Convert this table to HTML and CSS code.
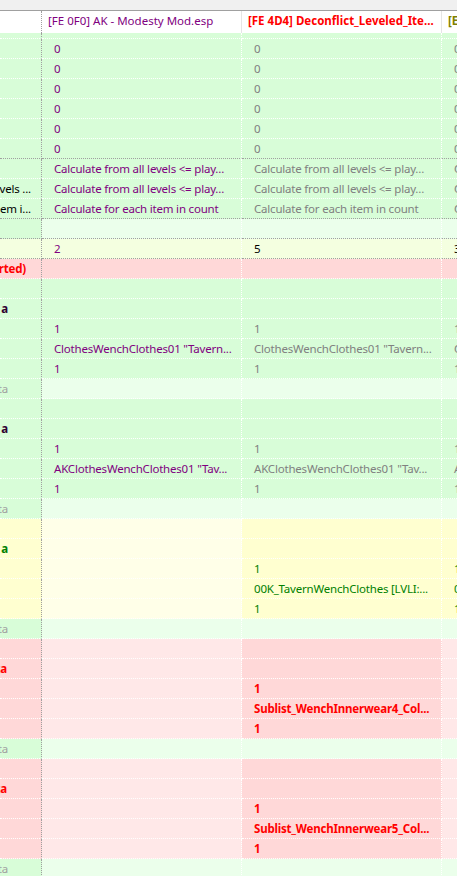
FILE: index.html
```html
<!DOCTYPE html>
<html lang="en">
<head>
    <meta charset="UTF-8">
    <title>Record Compare</title>
    <link rel="stylesheet" href="styles.css">
</head>
<body>
    <div class="topbar"></div>
    <div class="head">
        <div class="hc c0"></div>
        <div class="hc c1 pu">[FE 0F0] AK - Modesty Mod.esp</div>
        <div class="hc c2 rd">[FE 4D4] Deconflict_Leveled_Ite...</div>
        <div class="hc c3 ol">[E</div>
    </div>
    <div class="grid">
        <div class="row g part"><div class="c c0"></div><div class="c c1"></div><div class="c c2"></div><div class="c c3"></div></div>

        <div class="row g"><div class="c c0"></div><div class="c c1 pu">0</div><div class="c c2 gr">0</div><div class="c c3 gr">0</div></div>
        <div class="row g"><div class="c c0"></div><div class="c c1 pu">0</div><div class="c c2 gr">0</div><div class="c c3 gr">0</div></div>
        <div class="row g"><div class="c c0"></div><div class="c c1 pu">0</div><div class="c c2 gr">0</div><div class="c c3 gr">0</div></div>
        <div class="row g"><div class="c c0"></div><div class="c c1 pu">0</div><div class="c c2 gr">0</div><div class="c c3 gr">0</div></div>
        <div class="row g"><div class="c c0"></div><div class="c c1 pu">0</div><div class="c c2 gr">0</div><div class="c c3 gr">0</div></div>
        <div class="row g sep"><div class="c c0"></div><div class="c c1 pu">0</div><div class="c c2 gr">0</div><div class="c c3 gr">0</div></div>
        <div class="row g"><div class="c c0"></div><div class="c c1 pu">Calculate from all levels &lt;= play...</div><div class="c c2 gr">Calculate from all levels &lt;= play...</div><div class="c c3 gr">C</div></div>
        <div class="row g"><div class="c c0 lbl e10">vels ...</div><div class="c c1 pu">Calculate from all levels &lt;= play...</div><div class="c c2 gr">Calculate from all levels &lt;= play...</div><div class="c c3 gr">C</div></div>
        <div class="row g sep"><div class="c c0 lbl e10">em i...</div><div class="c c1 pu">Calculate for each item in count</div><div class="c c2 gr">Calculate for each item in count</div><div class="c c3 gr">C</div></div>
        <div class="row gl sep"><div class="c c0"></div><div class="c c1"></div><div class="c c2"></div><div class="c c3"></div></div>
        <div class="row yg sep"><div class="c c0"></div><div class="c c1 pu">2</div><div class="c c2 bk">5</div><div class="c c3 bk">3</div></div>
        <div class="row r"><div class="c c0 lbl e15 rd">rted)</div><div class="c c1"></div><div class="c c2"></div><div class="c c3"></div></div>

        <div class="row g"><div class="c c0"></div><div class="c c1"></div><div class="c c2"></div><div class="c c3"></div></div>
        <div class="row g"><div class="c c0 lbl e33 dk">a</div><div class="c c1"></div><div class="c c2"></div><div class="c c3"></div></div>
        <div class="row g"><div class="c c0"></div><div class="c c1 pu">1</div><div class="c c2 gr">1</div><div class="c c3 gr">1</div></div>
        <div class="row g"><div class="c c0"></div><div class="c c1 pu">ClothesWenchClothes01 "Tavern...</div><div class="c c2 gr">ClothesWenchClothes01 "Tavern...</div><div class="c c3 gr">C</div></div>
        <div class="row g"><div class="c c0"></div><div class="c c1 pu">1</div><div class="c c2 gr">1</div><div class="c c3 gr">1</div></div>
        <div class="row gl"><div class="c c0 lbl e33 lg">ta</div><div class="c c1"></div><div class="c c2"></div><div class="c c3"></div></div>

        <div class="row g"><div class="c c0"></div><div class="c c1"></div><div class="c c2"></div><div class="c c3"></div></div>
        <div class="row g"><div class="c c0 lbl e33 dk">a</div><div class="c c1"></div><div class="c c2"></div><div class="c c3"></div></div>
        <div class="row g"><div class="c c0"></div><div class="c c1 pu">1</div><div class="c c2 gr">1</div><div class="c c3 gr">1</div></div>
        <div class="row g"><div class="c c0"></div><div class="c c1 pu">AKClothesWenchClothes01 "Tav...</div><div class="c c2 gr">AKClothesWenchClothes01 "Tav...</div><div class="c c3 gr">A</div></div>
        <div class="row g"><div class="c c0"></div><div class="c c1 pu">1</div><div class="c c2 gr">1</div><div class="c c3 gr">1</div></div>
        <div class="row gl"><div class="c c0 lbl e33 lg">ta</div><div class="c c1"></div><div class="c c2"></div><div class="c c3"></div></div>

        <div class="row y"><div class="c c0"></div><div class="c c1"></div><div class="c c2"></div><div class="c c3"></div></div>
        <div class="row y"><div class="c c0 lbl e33 gnb">a</div><div class="c c1"></div><div class="c c2"></div><div class="c c3"></div></div>
        <div class="row y"><div class="c c0"></div><div class="c c1"></div><div class="c c2 gn">1</div><div class="c c3 gn">1</div></div>
        <div class="row y"><div class="c c0"></div><div class="c c1"></div><div class="c c2 gn">00K_TavernWenchClothes [LVLI:...</div><div class="c c3 gn">0</div></div>
        <div class="row y"><div class="c c0"></div><div class="c c1"></div><div class="c c2 gn">1</div><div class="c c3 gn">1</div></div>
        <div class="row gl"><div class="c c0 lbl e33 lg">ta</div><div class="c c1"></div><div class="c c2"></div><div class="c c3"></div></div>

        <div class="row p"><div class="c c0"></div><div class="c c1"></div><div class="c c2"></div><div class="c c3"></div></div>
        <div class="row p"><div class="c c0 lbl e34 rd">ta</div><div class="c c1"></div><div class="c c2"></div><div class="c c3"></div></div>
        <div class="row p"><div class="c c0"></div><div class="c c1"></div><div class="c c2 rd">1</div><div class="c c3"></div></div>
        <div class="row p"><div class="c c0"></div><div class="c c1"></div><div class="c c2 rd">Sublist_WenchInnerwear4_Col...</div><div class="c c3"></div></div>
        <div class="row p"><div class="c c0"></div><div class="c c1"></div><div class="c c2 rd">1</div><div class="c c3"></div></div>
        <div class="row gl"><div class="c c0 lbl e33 lg">ta</div><div class="c c1"></div><div class="c c2"></div><div class="c c3"></div></div>

        <div class="row p"><div class="c c0"></div><div class="c c1"></div><div class="c c2"></div><div class="c c3"></div></div>
        <div class="row p"><div class="c c0 lbl e34 rd">ta</div><div class="c c1"></div><div class="c c2"></div><div class="c c3"></div></div>
        <div class="row p"><div class="c c0"></div><div class="c c1"></div><div class="c c2 rd">1</div><div class="c c3"></div></div>
        <div class="row p"><div class="c c0"></div><div class="c c1"></div><div class="c c2 rd">Sublist_WenchInnerwear5_Col...</div><div class="c c3"></div></div>
        <div class="row p"><div class="c c0"></div><div class="c c1"></div><div class="c c2 rd">1</div><div class="c c3"></div></div>
        <div class="row gl"><div class="c c0 lbl e33 lg">ta</div><div class="c c1"></div><div class="c c2"></div><div class="c c3"></div></div>
    </div>
</body>
</html>
```

FILE: styles.css
```css
body {
    margin: 0;
    overflow: hidden;
    font-family: "Noto Sans", sans-serif;
    font-size: 11.5px;
    background: #ffffff;
}
.topbar {
    height: 10px;
    background: #f0f0f0;
    border-bottom: 1px solid #a0a0a0;
}
.head {
    display: flex;
    height: 22px;
    background: #ffffff;
}
.hc {
    box-sizing: border-box;
    padding-left: 6px;
    line-height: 20px;
    white-space: nowrap;
    overflow: hidden;
    border-right: 1px solid #e5e5e5;
}
.hc.c0 {
    padding-left: 0;
}
.hc.rd, .hc.ol {
    font-weight: bold;
}
.row {
    display: flex;
    height: 20px;
}
.row.part {
    height: 6px;
}
.c {
    box-sizing: border-box;
    padding-left: 12px;
    line-height: 19px;
    letter-spacing: -0.2px;
    white-space: nowrap;
    overflow: hidden;
    border-bottom: 1px dotted #ffffff;
    border-right: 1px dotted #ffffff;
}
.c0 {
    width: 42px;
    flex: none;
    padding-left: 0;
    border-right: 1px dotted #a0a0a0;
}
.c1, .c2 {
    width: 200px;
    flex: none;
}
.c3 {
    flex: 1;
    border-right: none;
}
.sep .c {
    border-bottom-color: #a0a0a0;
}
.lbl {
    display: flex;
    justify-content: flex-end;
}
.e10 { padding-right: 10px; }
.e15 { padding-right: 15px; }
.e33 { padding-right: 33px; }
.e34 { padding-right: 34px; }

/* row colours */
.g .c { background: #d8fdd8; }
.gl .c { background: #ebffeb; }
.gl .c0 { background: #d8fdd8; }
.yg .c { background: #f4ffe0; }
.r .c { background: #ffd8d8; }
.y .c { background: #ffffd0; }
.y .c1 { background: #ffffe8; }
.p .c { background: #ffe8e8; }
.p .c0, .p .c2 { background: #ffd8d8; }

/* text colours */
.pu { color: #800080; }
.gr { color: #808080; }
.bk { color: #000000; }
.gn { color: #008000; }
.gnb { color: #008000; font-weight: bold; }
.rd { color: #ff0000; font-weight: bold; }
.ol { color: #808000; }
.dk { color: #300030; font-weight: bold; }
.lg { color: #a0a0a0; }
```
